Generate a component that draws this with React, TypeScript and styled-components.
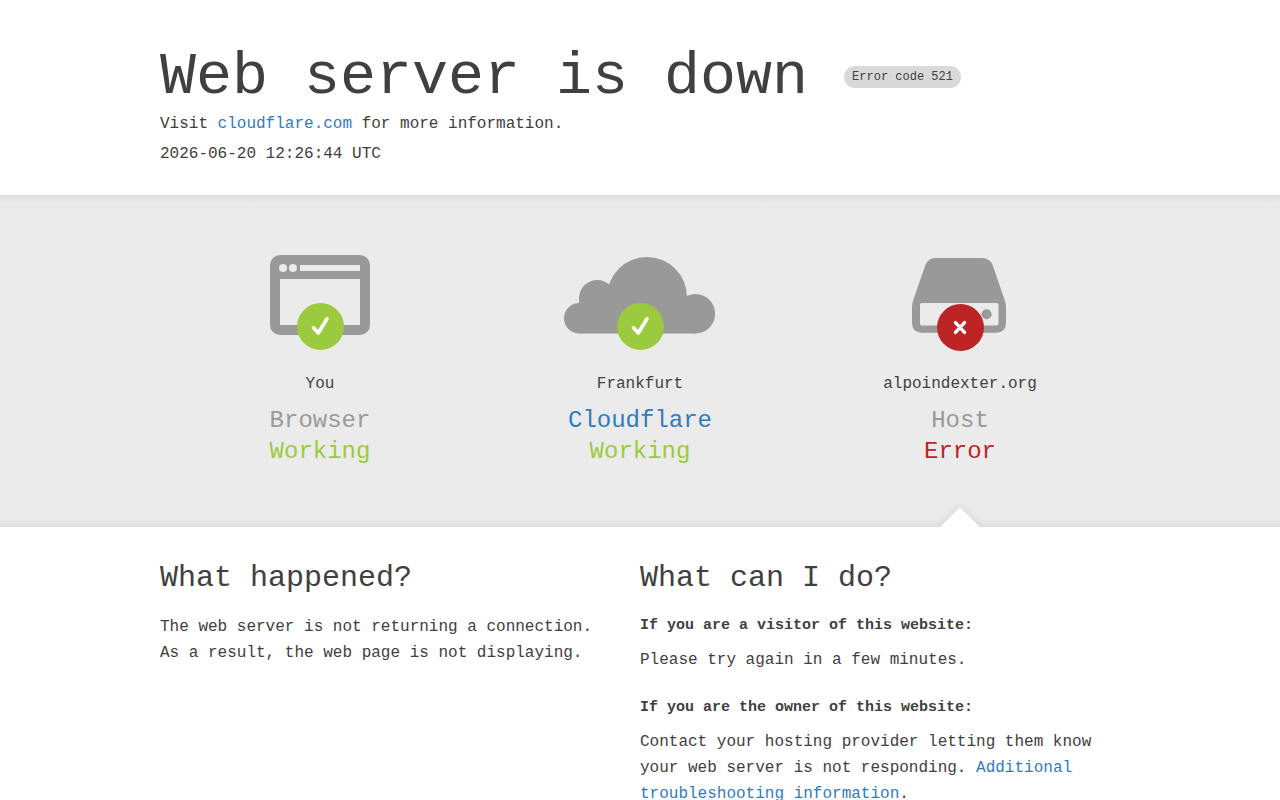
import React from 'react';
import styled, { createGlobalStyle } from 'styled-components';

const GlobalStyle = createGlobalStyle`
  * { box-sizing: border-box; }
  body {
    margin: 0;
    background: #fff;
    color: #404040;
    font: 16px/24px "Liberation Mono", monospace;
  }
  h1, h2, h3, p { margin: 0; font-weight: 400; }
`;

const Container = styled.div`
  max-width: 960px;
  margin: 0 auto;
`;

const Header = styled.header`
  padding: 47px 0 29px;
`;

const TitleRow = styled.div`
  display: flex;
  flex-wrap: wrap;
  align-items: center;
  column-gap: 36px;
  margin-bottom: 5px;
`;

const Title = styled.h1`
  font-size: 60px;
  line-height: 60px;
`;

const CodeBadge = styled.span`
  padding: 0 8px;
  border-radius: 11px;
  background: #d9d9d9;
  font-size: 12px;
  line-height: 22px;
`;

const HeaderLine = styled.p`
  & + & { margin-top: 6px; }
`;

const Link = styled.a`
  color: #2f7bbf;
  text-decoration: none;
`;

const StatusBand = styled.section`
  overflow: hidden;
  background: linear-gradient(#dedede, #ebebeb 8px, #ebebeb calc(100% - 8px), #dfdfdf);
`;

const StatusGrid = styled(Container)`
  display: grid;
  grid-template-columns: repeat(3, 1fr);
`;

const StatusCell = styled.div`
  position: relative;
  display: flex;
  flex-direction: column;
  align-items: center;
  padding: 60px 0;
`;

const StatusIcon = styled.svg`
  width: 160px;
  height: 100px;
  margin-bottom: 17px;
`;

const Place = styled.span`
  margin-bottom: 9px;
`;

const StatusText = styled.h3<{ $color: string }>`
  color: ${({ $color }) => $color};
  font-size: 24px;
  line-height: 31px;
`;

const Caret = styled.span`
  position: absolute;
  bottom: -14px;
  left: calc(50% - 14px);
  width: 28px;
  height: 28px;
  background: #fff;
  box-shadow: 0 0 8px #d0d0d0;
  transform: rotate(45deg);
`;

const Details = styled(Container)`
  display: grid;
  grid-template-columns: 1fr 1fr;
  padding: 31px 0 60px;
`;

const Column = styled.section`
  &:first-child { padding-right: 32px; }
`;

const Heading = styled.h2`
  margin-bottom: 16px;
  font-size: 30px;
  line-height: 40px;
`;

const SubHeading = styled.h3`
  && { font-weight: 700; }
  margin-bottom: 9px;
  font-size: 15px;
  line-height: 24px;
`;

const Paragraph = styled.p`
  line-height: 26px;
  margin-bottom: 23px;
`;

const BrowserShape = () => (
  <>
    <rect x="30" width="100" height="80" rx="10" fill="#999" />
    <circle cx="43" cy="13" r="4" fill="#ebebeb" />
    <circle cx="53" cy="13" r="4" fill="#ebebeb" />
    <path d="M60 10h60v6H60zM40 24h80v46H40z" fill="#ebebeb" />
  </>
);

const CloudShape = () => (
  <g fill="#999">
    <circle cx="87" cy="42" r="40" />
    <circle cx="37.3" cy="43.3" r="18.3" />
    <circle cx="19.3" cy="63.2" r="15.3" />
    <circle cx="135.4" cy="58.8" r="19.7" />
    <path d="M19.3 45h116.1v33.5H19.3z" />
  </g>
);

const HostShape = () => (
  <>
    <path
      d="M55 3h47q8 0 11 8l12 35q1 3 1 6v16q0 9.7-10 9.7H42q-10 0-10-9.7V52q0-3 1-6l12-35q3-8 10-8z"
      fill="#999"
    />
    <rect x="40" y="48" width="78.5" height="22.5" rx="2" fill="#ebebeb" />
    <circle cx="106.6" cy="59.2" r="5" fill="#999" />
  </>
);

const OkMark = () => (
  <>
    <circle cx="80.5" cy="71.5" r="23.5" fill="#9bca3e" />
    <path
      d="M73.5 72.8l4.8 5.2L87 63.8"
      fill="none"
      stroke="#fff"
      strokeWidth="3.6"
      strokeLinecap="round"
      strokeLinejoin="round"
    />
  </>
);

const ErrorMark = () => (
  <>
    <circle cx="80.5" cy="72.5" r="23.5" fill="#bd2426" />
    <path d="M75.5 67.6l9 9.8m0-9.8l-9 9.8" stroke="#fff" strokeWidth="3.4" strokeLinecap="round" />
  </>
);

const statuses = [
  { place: 'You', name: 'Browser', nameColor: '#999', ok: true, Shape: BrowserShape },
  { place: 'Frankfurt', name: 'Cloudflare', nameColor: '#2f7bbf', ok: true, Shape: CloudShape },
  { place: 'alpoindexter.org', name: 'Host', nameColor: '#999', ok: false, Shape: HostShape },
];

export default function App() {
  return (
    <>
      <GlobalStyle />
      <Header>
        <Container>
          <TitleRow>
            <Title>Web server is down</Title>
            <CodeBadge>Error code 521</CodeBadge>
          </TitleRow>
          <HeaderLine>
            Visit <Link href="#cloudflare">cloudflare.com</Link> for more information.
          </HeaderLine>
          <HeaderLine>2026-06-20 12:26:44 UTC</HeaderLine>
        </Container>
      </Header>
      <main>
        <StatusBand>
          <StatusGrid>
            {statuses.map(({ place, name, nameColor, ok, Shape }) => (
              <StatusCell key={name}>
                <StatusIcon viewBox="0 0 160 100" aria-hidden="true">
                  <Shape />
                  {ok ? <OkMark /> : <ErrorMark />}
                </StatusIcon>
                <Place>{place}</Place>
                <StatusText $color={nameColor}>{name}</StatusText>
                <StatusText $color={ok ? '#9bca3e' : '#bd2426'}>{ok ? 'Working' : 'Error'}</StatusText>
                {!ok && <Caret />}
              </StatusCell>
            ))}
          </StatusGrid>
        </StatusBand>
        <Details>
          <Column>
            <Heading>What happened?</Heading>
            <Paragraph>
              The web server is not returning a connection. As a result, the web page is not displaying.
            </Paragraph>
          </Column>
          <Column>
            <Heading>What can I do?</Heading>
            <SubHeading>If you are a visitor of this website:</SubHeading>
            <Paragraph>Please try again in a few minutes.</Paragraph>
            <SubHeading>If you are the owner of this website:</SubHeading>
            <Paragraph>
              Contact your hosting provider letting them know your web server is not responding.{' '}
              <Link href="#troubleshooting">Additional troubleshooting information</Link>.
            </Paragraph>
          </Column>
        </Details>
      </main>
    </>
  );
}
